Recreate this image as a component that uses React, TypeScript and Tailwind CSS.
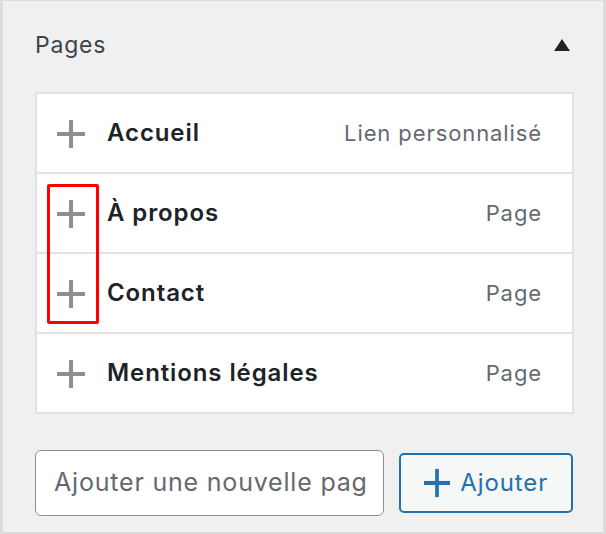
const rows = [
  { label: "Accueil", type: "Lien personnalisé" },
  { label: "À propos", type: "Page" },
  { label: "Contact", type: "Page" },
  { label: "Mentions légales", type: "Page" },
];

function Plus({ className }: { className?: string }) {
  return (
    <svg viewBox="0 0 28 28" className={className} fill="currentColor">
      <rect x="12" y="0" width="4" height="28" />
      <rect x="0" y="12" width="28" height="4" />
    </svg>
  );
}

export default function App() {
  return (
    <div
      className="w-[606px] h-[534px] bg-[#f0f0f1] border-l-[3px] border-r-[3px] border-t border-b-2 border-[#dcdcde] pl-[32px] pr-[30px] pt-[26px]"
      style={{ fontFamily: "Inter, 'Noto Sans', sans-serif" }}
    >
      <div className="flex items-center justify-between h-[36px] pr-[2px]">
        <h2 className="text-[23px] tracking-[0.8px] text-[#3c434a] font-normal">Pages</h2>
        <span className="w-0 h-0 border-l-[8px] border-r-[8px] border-b-[12px] border-l-transparent border-r-transparent border-b-[#1d2327] mr-[1px]"></span>
      </div>

      <div className="relative mt-[29px] w-[539px] bg-white border-2 border-[#e2e2e4]">
        {rows.map((r, i) => (
          <div
            key={r.label}
            className={`flex items-center pl-[20px] pr-[30px] ${i > 0 ? "h-[80px] border-t-2 border-[#e2e2e4]" : "h-[78px]"}`}
          >
            <Plus className="w-[28px] h-[28px] text-[#8c8f94] mt-[2px]" />
            <span className="ml-[22px] text-[24px] tracking-[0.9px] font-semibold text-[#1d2327]">{r.label}</span>
            <span className="ml-auto text-[22px] tracking-[0.9px] text-[#646970]">{r.type}</span>
          </div>
        ))}
        <div className="absolute left-[10px] top-[90px] w-[52px] h-[140px] border-[3px] border-[#ff0000] rounded-[2px]"></div>
      </div>

      <div className="flex items-center mt-[36px] gap-[15px]">
        <div className="w-[350px] h-[66px] bg-white border border-[#8c8f94] rounded-[6px] pl-[18px] pr-[16px] flex items-center overflow-hidden">
          <span className="text-[25px] tracking-[0.8px] text-[#646970] whitespace-nowrap overflow-hidden">
            Ajouter une nouvelle page
          </span>
        </div>
        <button className="w-[174px] h-[60px] bg-[#f6f7f7] border-2 border-[#2271b1] rounded-[5px] flex items-center justify-center gap-[10px] text-[#2271b1]">
          <Plus className="w-[26px] h-[26px] scale-y-110" />
          <span className="text-[24px] tracking-[0.9px]">Ajouter</span>
        </button>
      </div>
    </div>
  );
}
